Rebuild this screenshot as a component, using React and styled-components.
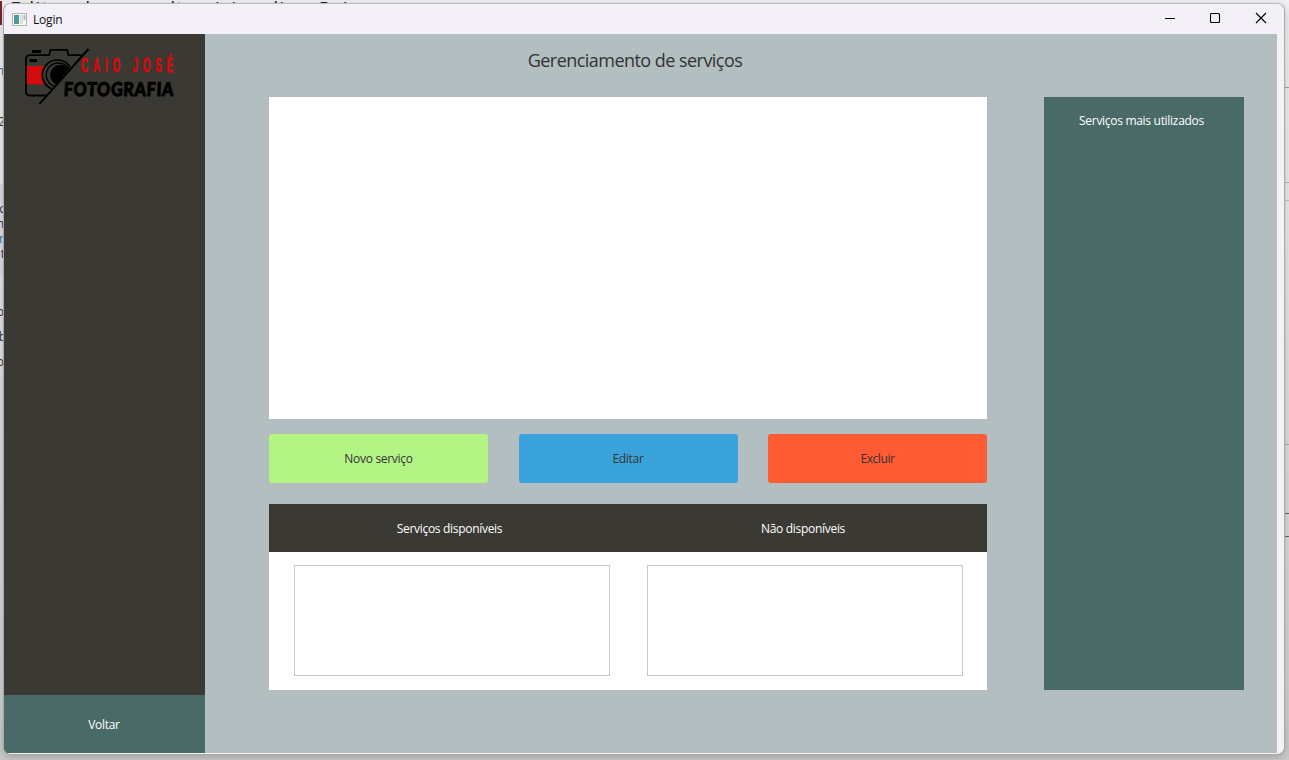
import React from "react";
import styled, { createGlobalStyle } from "styled-components";

const GlobalStyle = createGlobalStyle`
  * { box-sizing: border-box; }
  html, body { margin: 0; height: 100%; overflow: hidden; }
  body { font-family: "Open Sans", "Noto Sans", sans-serif; font-size: 12px; }
`;

const Desktop = styled.div`
  position: relative;
  width: 1289px;
  height: 760px;
  overflow: hidden;
  background: linear-gradient(#f1f1f3 0, #ececee 180px, #dedee1 420px, #d2d2d2 700px, #c9c9c9 760px);
`;

const Backdrop = styled.div`
  display: flex;
  justify-content: space-between;
  height: 760px;
`;

const BackdropLeft = styled.div`
  width: 700px;
`;

const BackdropHeading = styled.div`
  display: flex;
  height: 60px;
  line-height: 18px;
  font-size: 20px;
  letter-spacing: 1px;
  white-space: pre;
  color: #2a2a2e;
`;

const Marker = styled.span`
  width: 2px;
  height: 24px;
  margin: 1px 8px 0 0;
  background: #7c2630;
`;

const Line = styled.div`
  display: flex;
  justify-content: flex-end;
  width: ${(p) => p.$w || 4}px;
  height: ${(p) => p.$h}px;
  line-height: 16px;
  padding-top: ${(p) => p.$pad || 0}px;
  color: ${(p) => p.$color || "#34343c"};
  background: ${(p) => p.$bg || "transparent"};
`;

const BackdropRight = styled.div`
  display: flex;
  flex-direction: column;
  width: 10px;
`;

const Cell = styled.div`
  flex: 0 0 ${(p) => p.$h}px;
  border-bottom: 1px solid ${(p) => p.$line};
`;

const BottomRule = styled.div`
  width: 1px;
  height: 10px;
  margin: 377px 0 0 237px;
  background: #555;
`;

const Window = styled.div`
  position: absolute;
  left: 3px;
  top: 3px;
  width: 1282px;
  height: 752px;
  display: flex;
  flex-direction: column;
  overflow: hidden;
  border: 1px solid #a9a9ad;
  border-top-color: #b9b9be;
  border-radius: 8px;
  background: #f3f3f3;
  box-shadow: 0 2px 8px rgba(0, 0, 0, 0.22);
`;

const TitleBar = styled.div`
  display: flex;
  align-items: center;
  flex: 0 0 30px;
  padding-left: 8px;
  background: #f3f0f8;
  color: #111;
`;

const AppTitle = styled.span`
  flex: 1;
  margin-left: 6px;
  letter-spacing: -0.2px;
`;

const WindowControls = styled.div`
  display: flex;
  margin-right: 1px;
  svg { display: block; width: 45.5px; height: 30px; }
`;

const Body = styled.div`
  display: flex;
  width: 1273px;
  height: 719px;
`;

const Sidebar = styled.aside`
  display: flex;
  flex-direction: column;
  justify-content: space-between;
  flex: 0 0 201px;
  background: #3b3934;
`;

const BackButton = styled.button`
  height: 58px;
  padding: 1px 1px 0 0;
  border: 0;
  background: #496a67;
  color: #fff;
  font: inherit;
`;

const Main = styled.main`
  display: flex;
  flex-direction: column;
  flex: 1;
  padding-left: 64px;
  background: #b2bec0;
`;

const Heading = styled.h1`
  width: 732px;
  height: 63px;
  margin: 0;
  line-height: 53px;
  font-size: 18px;
  font-weight: 400;
  letter-spacing: -0.54px;
  text-align: center;
  color: #333;
`;

const Columns = styled.div`
  display: flex;
  gap: 57px;
  height: 593px;
`;

const Column = styled.div`
  width: 718px;
`;

const ServiceList = styled.div`
  height: 322px;
  background: #fff;
`;

const Actions = styled.div`
  display: flex;
  justify-content: space-between;
  padding: 15px 0 21px;
`;

const ActionButton = styled.button`
  width: 219px;
  height: 49px;
  padding: 0;
  border: 0;
  border-radius: 3px;
  background: ${(p) => p.$color};
  color: #333;
  font: inherit;
`;

const Label = styled.span`
  letter-spacing: ${(p) => p.$track ?? -0.3}px;
  white-space: nowrap;
`;

const Availability = styled.section`
  height: 186px;
  background: #fff;
`;

const AvailabilityHeader = styled.div`
  display: grid;
  grid-template-columns: 361px 346px;
  height: 48px;
  line-height: 49px;
  text-align: center;
  background: #3b3934;
  color: #fff;
`;

const Lists = styled.div`
  display: flex;
  gap: 37px;
  padding: 13px 24px 0 25px;
`;

const ListBox = styled.div`
  width: 316px;
  height: 111px;
  border: 1px solid #c8c8c8;
`;

const TopServices = styled.aside`
  width: 200px;
  padding-right: 5px;
  line-height: 48px;
  text-align: center;
  background: #496a67;
  color: #fff;
`;

const LogoSvg = styled.svg`
  display: block;
  margin: 10px 0 0 16px;
`;

function AppIcon() {
  return (
    <svg width="15" height="13" viewBox="0 0 15 13">
      <defs>
        <linearGradient id="tile" x1="0" y1="0" x2="1" y2="1">
          <stop offset="0" stopColor="#5b8fc0" />
          <stop offset="1" stopColor="#3fa373" />
        </linearGradient>
      </defs>
      <rect x=".5" y=".5" width="14" height="12" fill="#f5f5f5" stroke="#b1b5ba" />
      <rect x="2" y="2" width="5" height="9" fill="url(#tile)" />
      <rect x="8" y="2" width="3" height="9" fill="#dddeda" />
      <rect x="11.5" y="2" width="2" height="5" fill="#9dcabd" />
    </svg>
  );
}

function Logo() {
  return (
    <LogoSvg width="164" height="66" viewBox="0 0 164 66">
      <defs>
        <clipPath id="upper-left"><path d="M0 0H71L16.5 62H0Z" /></clipPath>
      </defs>
      <path d="M6.5 22H25V40.3H6.5Z" fill="#d40b0b" />
      <g clipPath="url(#upper-left)">
        <circle cx="37.3" cy="31" r="15" fill="#3b3934" stroke="#000" strokeWidth="1.7" />
        <circle cx="38.3" cy="31" r="12" fill="none" stroke="#000" strokeWidth="1.3" />
        <circle cx="40.3" cy="31" r="10.2" />
        <path
          d="M66 11.2H48.5L47 5.8H30.5L29 11.2H10Q6 11.2 6 15V47.5Q6 51.5 10 51.5H27"
          fill="none" stroke="#000" strokeWidth="1.8"
        />
      </g>
      <rect x="12" y="6" width="9" height="3" />
      <rect x="9.5" y="15" width="7.5" height="3" />
      <path d="M19.5 59.8L68.5 5" stroke="#000" strokeWidth="2" />
      <g transform="translate(61 28) scale(.48 1)">
        <text
          y="0" fill="#d40b0b" stroke="#d40b0b" strokeWidth=".9" fontFamily="Liberation Sans, sans-serif"
          fontWeight="700" fontSize="20.5" textLength="192" lengthAdjust="spacing" xmlSpace="preserve"
        >CAIO JOSÉ</text>
      </g>
      <g transform="translate(43.5 51.6) skewX(-3) scale(.85 1)">
        <text
          y="0" stroke="#000" strokeWidth="1" strokeLinejoin="round" fontFamily="Lato, sans-serif"
          fontWeight="900" fontSize="19" textLength="129" lengthAdjust="spacing"
        >FOTOGRAFIA</text>
      </g>
    </LogoSvg>
  );
}

export default function App() {
  return (
    <Desktop>
      <GlobalStyle />
      <Backdrop>
        <BackdropLeft>
          <BackdropHeading><Marker />Editor de consultas (visualização)</BackdropHeading>
          <Line $h={27} $pad={3} $color="#2f6fb0">n</Line>
          <Line $h={97} $w={5} $pad={27}>2</Line>
          <Line $h={32} $w={5} $pad={17} $bg="#dcdfea">c</Line>
          <Line $h={15} $bg="#dcdfea">n</Line>
          <Line $h={15} $bg="#dcdfea" $color="#2f6fb0">r</Line>
          <Line $h={32} $w={5} $bg="#dcdfea">at</Line>
          <Line $h={50} $pad={26}>o</Line>
          <Line $h={25} $w={6} $pad={1}>b</Line>
          <Line $h={30} $pad={1}>o</Line>
          <BottomRule />
        </BackdropLeft>
        <BackdropRight>
          <Cell $h={88} $line="#a5a5a7" />
          <Cell $h={95} $line="#b4b4b6" />
          <Cell $h={18} $line="#c2c2c4" />
          <Cell $h={244} $line="#b0b0b0" />
          <Cell $h={69} $line="#666" />
          <Cell $h={23} $line="#666" />
        </BackdropRight>
      </Backdrop>

      <Window>
        <TitleBar>
          <AppIcon />
          <AppTitle>Login</AppTitle>
          <WindowControls>
            <svg viewBox="0 0 45.5 30"><path d="M18 14.5h10" stroke="#000" /></svg>
            <svg viewBox="0 0 45.5 30"><rect x="18.5" y="9.5" width="9" height="9" rx="1" fill="none" stroke="#000" strokeWidth="1.1" /></svg>
            <svg viewBox="0 0 45.5 30"><path d="M18 9l10 10M28 9l-10 10" stroke="#000" strokeWidth="1.1" /></svg>
          </WindowControls>
        </TitleBar>
        <Body>
          <Sidebar>
            <Logo />
            <BackButton><Label>Voltar</Label></BackButton>
          </Sidebar>
          <Main>
            <Heading>Gerenciamento de serviços</Heading>
            <Columns>
              <Column>
                <ServiceList />
                <Actions>
                  <ActionButton $color="#b4f485"><Label>Novo serviço</Label></ActionButton>
                  <ActionButton $color="#3aa3dc"><Label>Editar</Label></ActionButton>
                  <ActionButton $color="#ff5b35"><Label $track={-0.4}>Excluir</Label></ActionButton>
                </Actions>
                <Availability>
                  <AvailabilityHeader>
                    <Label>Serviços disponíveis</Label>
                    <Label>Não disponíveis</Label>
                  </AvailabilityHeader>
                  <Lists>
                    <ListBox />
                    <ListBox />
                  </Lists>
                </Availability>
              </Column>
              <TopServices><Label>Serviços mais utilizados</Label></TopServices>
            </Columns>
          </Main>
        </Body>
      </Window>
    </Desktop>
  );
}
